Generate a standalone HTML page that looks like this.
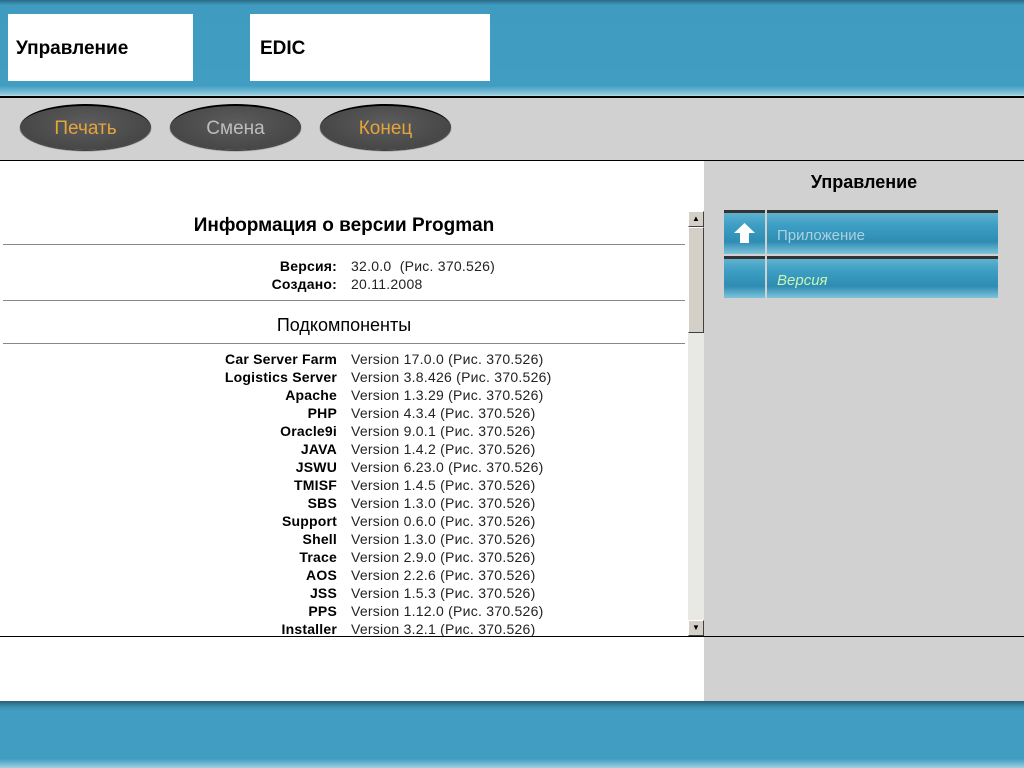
<!DOCTYPE html>
<html><head><meta charset="utf-8"><style>
*{margin:0;padding:0;box-sizing:border-box}
body{width:1024px;height:768px;position:relative;overflow:hidden;background:#fff;font-family:"Liberation Sans",sans-serif}
.abs{position:absolute}
.top{left:0;top:0;width:1024px;height:96px;background:linear-gradient(#2a6a85 0,#3f9bbf 5px,#419ec2 86px,#8cc6dc 94px,#b8dbe8 96px)}
.box{background:#fff;top:14px;height:67px;font-weight:bold;font-size:19px;padding:24px 0 0 8px;color:#000}
.bar{left:0;top:96px;width:1024px;height:65px;background:#d1d1d1;border-top:2px solid #000;border-bottom:1px solid #000}
.btn{top:104px;width:131px;height:46px;border-radius:50%;background:radial-gradient(ellipse at 50% 40%,#5c5c5c,#3e3e3e);border-top:2px solid #000;box-shadow:0 1px 1px #222;font-size:19px;text-align:center;line-height:46px}
.right{left:704px;top:161px;width:320px;height:540px;background:#d1d1d1}
.bottom{left:0;top:701px;width:1024px;height:67px;background:linear-gradient(#2a5f75 0,#3b91b2 6px,#419ec2 10px,#419ec2 58px,#9fd0e2 67px)}
.hl{left:3px;width:682px;height:1px;background:#888}
.row{left:0;width:700px;font-size:14px;height:18px;line-height:18px}
.row b{position:absolute;right:363px;white-space:nowrap;letter-spacing:0.2px}
.row span{position:absolute;left:351px;white-space:nowrap;color:#222;letter-spacing:0.25px}
.nav{background:linear-gradient(#5fb2d0,#3d9ec4 30%,#2f8cb3 70%,#7ec4dc);border-top:3px solid #333}
</style></head><body>
<div class="abs top"></div>
<div class="abs box" style="left:8px;width:185px">Управление</div>
<div class="abs box" style="left:250px;width:240px;padding-left:10px">EDIC</div>
<div class="abs bar"></div>
<div class="abs btn" style="left:20px;color:#e6a43a">Печать</div>
<div class="abs btn" style="left:170px;color:#bdbdbd">Смена</div>
<div class="abs btn" style="left:320px;color:#e6a43a">Конец</div>
<div class="abs right"></div>
<div class="abs" style="left:704px;top:172px;width:320px;text-align:center;font-weight:bold;font-size:18px">Управление</div>
<div class="abs nav" style="left:724px;top:210px;width:41px;height:44px"><svg width="41" height="41"><path d="M20.5 10 L31 20 L25 20 L25 30 L16 30 L16 20 L10 20 Z" fill="#fff"/></svg></div>
<div class="abs nav" style="left:767px;top:210px;width:231px;height:44px;color:#a9d2e0;font-size:15px;padding:14px 0 0 10px">Приложение</div>
<div class="abs nav" style="left:724px;top:256px;width:41px;height:42px"></div>
<div class="abs nav" style="left:767px;top:256px;width:231px;height:42px;color:#c8f5b0;font-size:15px;font-style:italic;padding:13px 0 0 10px">Версия</div>
<div class="abs" style="left:0;top:215px;width:688px;text-align:center;font-weight:bold;font-size:19px">Информация о версии Progman</div>
<div class="abs hl" style="top:244px"></div>
<div class="abs row" style="top:257px"><b>Версия:</b><span>32.0.0&nbsp; (Рис. 370.526)</span></div>
<div class="abs row" style="top:275px"><b>Создано:</b><span>20.11.2008</span></div>
<div class="abs hl" style="top:300px"></div>
<div class="abs" style="left:0;top:315px;width:688px;text-align:center;font-size:18px">Подкомпоненты</div>
<div class="abs hl" style="top:343px"></div>
<div class="abs" style="left:0;top:350px;width:688px;height:286px;overflow:hidden">
<div class="abs row" style="top:0"><b>Car Server Farm</b><span>Version 17.0.0 (Рис. 370.526)</span></div>
<div class="abs row" style="top:18px"><b>Logistics Server</b><span>Version 3.8.426 (Рис. 370.526)</span></div>
<div class="abs row" style="top:36px"><b>Apache</b><span>Version 1.3.29 (Рис. 370.526)</span></div>
<div class="abs row" style="top:54px"><b>PHP</b><span>Version 4.3.4 (Рис. 370.526)</span></div>
<div class="abs row" style="top:72px"><b>Oracle9i</b><span>Version 9.0.1 (Рис. 370.526)</span></div>
<div class="abs row" style="top:90px"><b>JAVA</b><span>Version 1.4.2 (Рис. 370.526)</span></div>
<div class="abs row" style="top:108px"><b>JSWU</b><span>Version 6.23.0 (Рис. 370.526)</span></div>
<div class="abs row" style="top:126px"><b>TMISF</b><span>Version 1.4.5 (Рис. 370.526)</span></div>
<div class="abs row" style="top:144px"><b>SBS</b><span>Version 1.3.0 (Рис. 370.526)</span></div>
<div class="abs row" style="top:162px"><b>Support</b><span>Version 0.6.0 (Рис. 370.526)</span></div>
<div class="abs row" style="top:180px"><b>Shell</b><span>Version 1.3.0 (Рис. 370.526)</span></div>
<div class="abs row" style="top:198px"><b>Trace</b><span>Version 2.9.0 (Рис. 370.526)</span></div>
<div class="abs row" style="top:216px"><b>AOS</b><span>Version 2.2.6 (Рис. 370.526)</span></div>
<div class="abs row" style="top:234px"><b>JSS</b><span>Version 1.5.3 (Рис. 370.526)</span></div>
<div class="abs row" style="top:252px"><b>PPS</b><span>Version 1.12.0 (Рис. 370.526)</span></div>
<div class="abs row" style="top:270px"><b>Installer</b><span>Version 3.2.1 (Рис. 370.526)</span></div>
</div>
<div class="abs" style="left:688px;top:211px;width:16px;height:425px;background:#e8e8e4"></div>
<div class="abs" style="left:688px;top:211px;width:16px;height:16px;background:#d4d0c8;border:1px solid;border-color:#fff #404040 #404040 #fff;font-size:8px;text-align:center;line-height:13px">▲</div>
<div class="abs" style="left:688px;top:227px;width:16px;height:106px;background:#d4d0c8;border:1px solid;border-color:#fff #404040 #404040 #fff"></div>
<div class="abs" style="left:688px;top:620px;width:16px;height:16px;background:#d4d0c8;border:1px solid;border-color:#fff #404040 #404040 #fff;font-size:8px;text-align:center;line-height:13px">▼</div>
<div class="abs" style="left:0;top:636px;width:1024px;height:1px;background:#000"></div>
<div class="abs bottom"></div>
</body></html>
